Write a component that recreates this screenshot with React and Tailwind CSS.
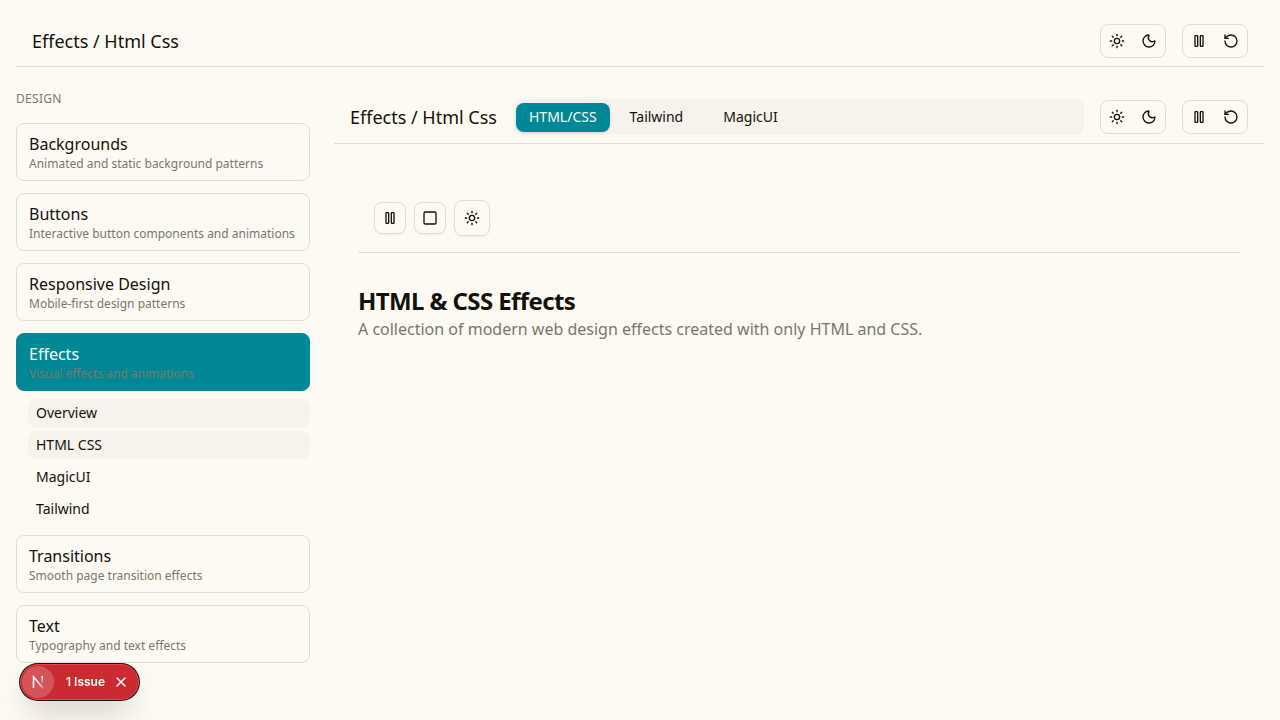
import { useState } from "react";
import { Sun, Moon, RotateCcw, Square, X } from "lucide-react";

const sections = [
  { title: "Backgrounds", text: "Animated and static background patterns" },
  { title: "Buttons", text: "Interactive button components and animations" },
  { title: "Responsive Design", text: "Mobile-first design patterns" },
  {
    title: "Effects",
    text: "Visual effects and animations",
    active: true,
    children: [
      { label: "Overview", active: true },
      { label: "HTML CSS", active: true },
      { label: "MagicUI" },
      { label: "Tailwind" },
    ],
  },
  { title: "Transitions", text: "Smooth page transition effects" },
  { title: "Text", text: "Typography and text effects" },
];

function PauseIcon() {
  return (
    <svg width="16" height="16" viewBox="0 0 24 24" fill="none" stroke="currentColor" strokeWidth="2" strokeLinecap="round" strokeLinejoin="round" aria-hidden="true">
      <rect x="14" y="4" width="4" height="16" rx="1" />
      <rect x="6" y="4" width="4" height="16" rx="1" />
    </svg>
  );
}

function IconButton({ label, children }) {
  return (
    <button type="button" aria-label={label} className="flex size-8 items-center justify-center rounded-md">
      {children}
    </button>
  );
}

function Controls() {
  return (
    <div className="flex shrink-0 gap-4">
      <div className="flex rounded-lg border border-[#e0dece]">
        <IconButton label="Light theme"><Sun size={16} /></IconButton>
        <IconButton label="Dark theme"><Moon size={16} /></IconButton>
      </div>
      <div className="flex rounded-lg border border-[#e0dece]">
        <IconButton label="Pause"><PauseIcon /></IconButton>
        <IconButton label="Restart"><RotateCcw size={16} /></IconButton>
      </div>
    </div>
  );
}

function Sidebar() {
  return (
    <nav aria-label="Design" className="w-[294px] shrink-0">
      <h2 className="pt-2 text-xs leading-4 tracking-wide text-[#79786c]">DESIGN</h2>
      <ul className="mt-4 flex flex-col gap-3">
        {sections.map((s) => (
          <li key={s.title}>
            <a
              href="#"
              className={
                s.active
                  ? "block rounded-lg border border-[#008896] bg-[#008896] px-3 py-2 text-[#fdfaf3]"
                  : "block rounded-lg border border-[#e0dece] px-3 py-2"
              }
            >
              <span className="block text-base leading-6">{s.title}</span>
              <span className="block text-xs leading-4 text-[#79786c]">{s.text}</span>
            </a>
            {s.children && (
              <ul className="mt-2 flex flex-col gap-1 pl-3">
                {s.children.map((c) => (
                  <li key={c.label}>
                    <a
                      href="#"
                      className={
                        c.active
                          ? "block rounded-lg bg-[#f6f3ec] px-2 py-1 text-sm leading-5"
                          : "block rounded-lg px-2 py-1 text-sm leading-5"
                      }
                    >
                      {c.label}
                    </a>
                  </li>
                ))}
              </ul>
            )}
          </li>
        ))}
      </ul>
    </nav>
  );
}

function Tabs() {
  const [tab, setTab] = useState("HTML/CSS");
  return (
    <div role="tablist" className="flex h-9 flex-1 items-center rounded-lg bg-[#f6f3ec] px-[3px]">
      {["HTML/CSS", "Tailwind", "MagicUI"].map((t) => (
        <button
          key={t}
          type="button"
          role="tab"
          aria-selected={t === tab}
          onClick={() => setTab(t)}
          className={
            t === tab
              ? "h-[29px] rounded-lg bg-[#008896] px-[13px] text-sm leading-5 text-[#fdfaf3] shadow-sm"
              : "h-[29px] rounded-lg px-5 text-sm leading-5"
          }
        >
          {t}
        </button>
      ))}
    </div>
  );
}

function IssueBadge() {
  return (
    <div className="fixed bottom-5 left-5 flex h-9 items-center rounded-full border border-[#e5484d] bg-[#ca2a30] pl-px pr-[9px] font-['Inter',sans-serif] text-white shadow-[0_0_0_1px_#171717,0_16px_32px_-8px_rgba(0,0,0,0.24)]">
      <button type="button" aria-label="Open developer tools" className="flex size-8 items-center justify-center rounded-full bg-white/20">
        <svg width="16" height="16" viewBox="0 0 16 16" fill="none" strokeWidth="1.5" aria-hidden="true">
          <defs>
            <linearGradient id="stem" x1="4" y1="2" x2="14" y2="15" gradientUnits="userSpaceOnUse">
              <stop offset="0.5" stopColor="white" />
              <stop offset="1" stopColor="white" stopOpacity="0.2" />
            </linearGradient>
            <linearGradient id="bar" x1="12" y1="2" x2="12" y2="11" gradientUnits="userSpaceOnUse">
              <stop stopColor="white" />
              <stop offset="1" stopColor="white" stopOpacity="0" />
            </linearGradient>
          </defs>
          <path d="M3.5 14V2.8L13 14.3" stroke="url(#stem)" />
          <path d="M12.2 2V11" stroke="url(#bar)" />
        </svg>
      </button>
      <button type="button" className="ml-3 text-xs leading-4 font-semibold">1 Issue</button>
      <button type="button" aria-label="Dismiss" className="ml-2"><X size={16} strokeWidth={2} /></button>
    </div>
  );
}

export default function App() {
  return (
    <div className="min-h-screen bg-[#fdfaf3] px-4 pt-4 font-['Noto_Sans',sans-serif] text-[#12110c]">
      <header className="flex items-center justify-between border-b border-[#e0dece] px-4 py-2">
        <p className="text-lg leading-7">Effects / Html Css</p>
        <Controls />
      </header>
      <div className="flex gap-6 pt-4">
        <Sidebar />
        <main className="min-w-0 flex-1 pt-2">
          <div className="flex items-center gap-4 border-b border-[#e0dece] px-4 pt-2 pb-2">
            <p className="text-lg leading-7">Effects / Html Css</p>
            <Tabs />
            <Controls />
          </div>
          <div className="px-6 pt-10">
            <div className="flex items-center gap-2 border-b border-[#e0dece] p-4">
              <button type="button" aria-label="Pause effects" className="flex size-8 items-center justify-center rounded-lg border border-[#e0dece] shadow-xs"><PauseIcon /></button>
              <button type="button" aria-label="Stop effects" className="flex size-8 items-center justify-center rounded-lg border border-[#e0dece] shadow-xs"><Square size={16} /></button>
              <button type="button" aria-label="Toggle theme" className="flex size-9 items-center justify-center rounded-lg border border-[#e0dece] shadow-xs"><Sun size={16} /></button>
            </div>
            <h1 className="mt-8 text-2xl leading-8 font-bold tracking-tight">HTML &amp; CSS Effects</h1>
            <p className="text-base leading-6 text-[#79786c]">A collection of modern web design effects created with only HTML and CSS.</p>
          </div>
        </main>
      </div>
      <IssueBadge />
    </div>
  );
}
